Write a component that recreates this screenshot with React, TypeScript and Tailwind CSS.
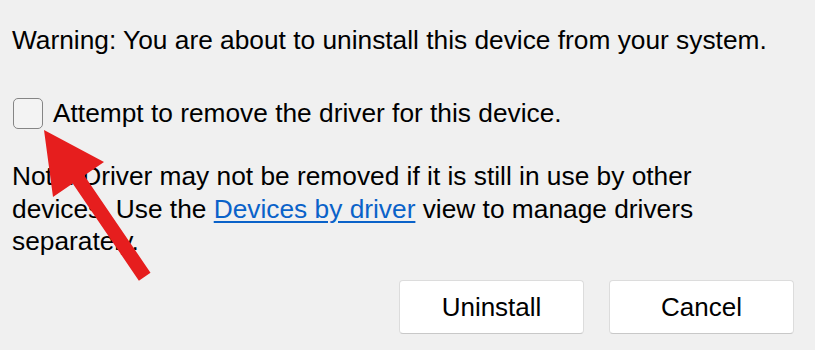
export default function App() {
  return (
    <div
      className="relative w-[815px] h-[350px] overflow-hidden bg-[#f0f0f0] text-[26.3px] leading-[32px] text-black"
      style={{ fontFamily: '"Liberation Sans", Arial, sans-serif' }}
    >
      <div className="flex flex-col pl-[12px] pt-[24px]">
        <p>Warning: You are about to uninstall this device from your system.</p>
        <label className="mt-[41px] flex items-center gap-[10px] pl-[1px]">
          <span className="block h-[31px] w-[30px] rounded-[5px] border-[1.5px] border-[#858585] bg-[#f3f3f3]" />
          <span>Attempt to remove the driver for this device.</span>
        </label>
        <p className="mt-[31px] w-[735px] leading-[32.5px]">
          Note: Driver may not be removed if it is still in use by other devices. Use the{" "}
          <a className="text-[#0a62c9] underline underline-offset-[3px] decoration-[1.5px]">Devices by driver</a> view to manage
          drivers separately.
        </p>
      </div>
      <div className="mt-[22px] flex justify-end gap-[25px] pr-[21px]">
        <button className="h-[54px] w-[185px] rounded-[4px] border border-[#dcdcdc] border-b-[#c8c8c8] bg-white text-[26px]">
          Uninstall
        </button>
        <button className="h-[54px] w-[185px] rounded-[4px] border border-[#dcdcdc] border-b-[#c8c8c8] bg-white text-[26px]">
          Cancel
        </button>
      </div>
      <svg className="absolute left-0 top-0" width="815" height="350" viewBox="0 0 815 350">
        <polygon
          points="44,130 104,162 84.3,175.5 150.5,272.7 138.9,280.7 72.7,183.5 53,197"
          fill="#e61e1e"
        />
      </svg>
    </div>
  );
}
